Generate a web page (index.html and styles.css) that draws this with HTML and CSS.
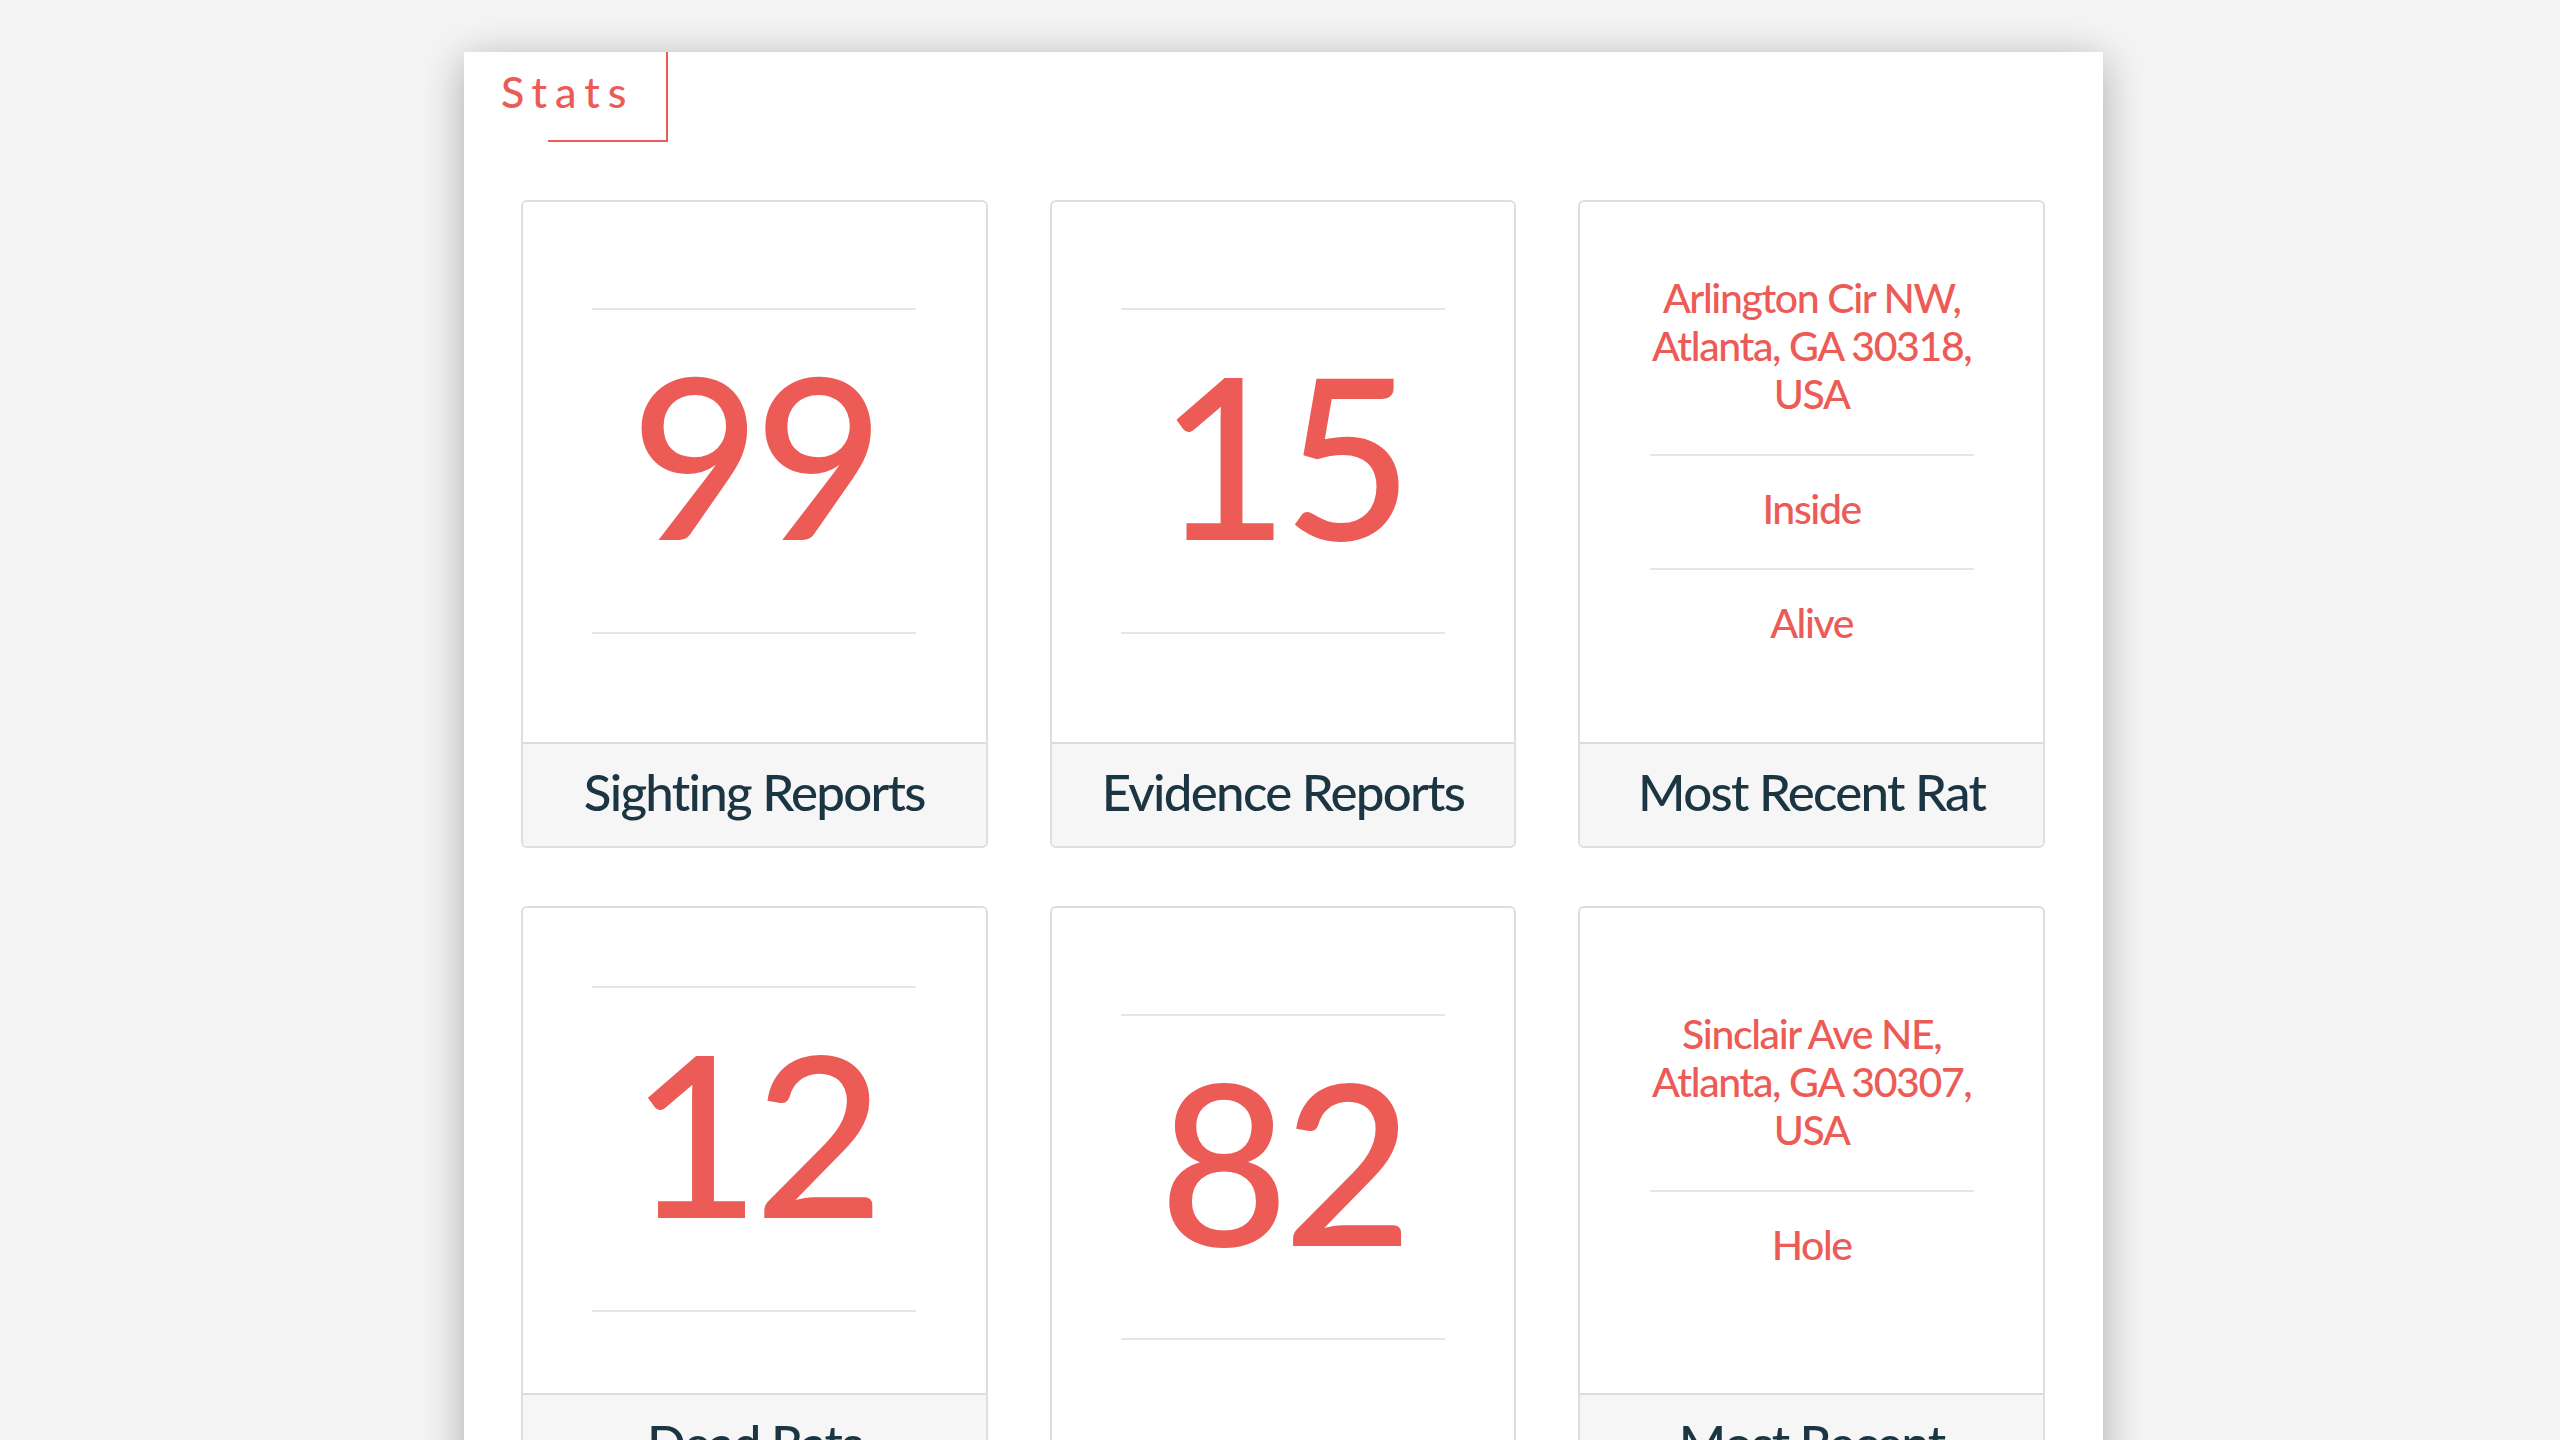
FILE: index.html
```html
<!DOCTYPE html>
<html lang="en">
<head>
<meta charset="utf-8">
<title>Stats</title>
<link rel="stylesheet" href="styles.css">
</head>
<body>
<main class="panel">
  <h1 class="title">Stats</h1>
  <section class="grid">
    <article class="card">
      <div class="body num"><div class="numblock">99</div></div>
      <div class="label">Sighting Reports</div>
    </article>
    <article class="card">
      <div class="body num"><div class="numblock">15</div></div>
      <div class="label">Evidence Reports</div>
    </article>
    <article class="card">
      <div class="body info">
        <div class="item">Arlington Cir NW,<br>Atlanta, GA 30318,<br>USA</div>
        <div class="item">Inside</div>
        <div class="item">Alive</div>
      </div>
      <div class="label">Most Recent Rat</div>
    </article>
    <article class="card">
      <div class="body num"><div class="numblock">12</div></div>
      <div class="label">Dead Rats<br>Found</div>
    </article>
    <article class="card">
      <div class="body num"><div class="numblock">82</div></div>
      <div class="label">Live Rats</div>
    </article>
    <article class="card">
      <div class="body info">
        <div class="item">Sinclair Ave NE,<br>Atlanta, GA 30307,<br>USA</div>
        <div class="item">Hole</div>
      </div>
      <div class="label">Most Recent<br>Dead Rat</div>
    </article>
  </section>
</main>
</body>
</html>
```

FILE: styles.css
```css
html, body {
  margin: 0;
  padding: 0;
}

body {
  background: #f4f4f4;
  font-family: Lato, "Open Sans", "Liberation Sans", sans-serif;
  overflow: hidden;
}

.panel {
  width: 1639px;
  margin: 52px 0 0 464px;
  background: #ffffff;
  box-shadow: 0 8px 40px rgba(0, 0, 0, 0.3);
  padding-bottom: 80px;
}

.title {
  position: relative;
  display: inline-block;
  box-sizing: border-box;
  width: 204px;
  height: 90px;
  margin: 0;
  padding: 16px 0 0 37px;
  font-size: 43px;
  line-height: 48px;
  font-weight: 500;
  letter-spacing: 8px;
  color: #ec5b56;
}

.title::after {
  content: "";
  position: absolute;
  top: 0;
  right: 0;
  width: 120px;
  height: 100%;
  box-sizing: border-box;
  border-right: 2px solid #ec5b56;
  border-bottom: 2px solid #ec5b56;
}

.grid {
  display: grid;
  grid-template-columns: repeat(3, 1fr);
  column-gap: 62px;
  row-gap: 58px;
  margin: 58px 58px 0 57px;
}

.card {
  display: flex;
  flex-direction: column;
  border: 2px solid #dedede;
  border-radius: 6px;
  overflow: hidden;
  background: #ffffff;
}

.body {
  flex: 1;
  display: flex;
  flex-direction: column;
  justify-content: center;
  align-items: center;
}

.body.num {
  padding: 78px 0 81px;
}

.numblock {
  width: 324px;
  border-top: 2px solid #e6e6e6;
  border-bottom: 2px solid #e6e6e6;
  padding: 32px 0 66px;
  font-size: 224px;
  line-height: 224px;
  font-weight: 500;
  letter-spacing: -6px;
  text-align: center;
  color: #ec5b56;
}

.body.info {
  padding: 72px 0 60px;
}

.item {
  width: 324px;
  padding: 29px 0 35px;
  border-top: 2px solid #e6e6e6;
  font-size: 41px;
  line-height: 48px;
  font-weight: 500;
  letter-spacing: -1.4px;
  white-space: nowrap;
  text-align: center;
  color: #ec5b56;
}

.item:first-child {
  padding-top: 0;
  padding-bottom: 36px;
  border-top: none;
}

.label {
  border-top: 2px solid #dcdcdc;
  background: #f6f6f6;
  padding: 20px 0 26px;
  font-size: 51px;
  line-height: 56px;
  font-weight: 500;
  letter-spacing: -1.7px;
  text-align: center;
  color: #1b3642;
}
```
